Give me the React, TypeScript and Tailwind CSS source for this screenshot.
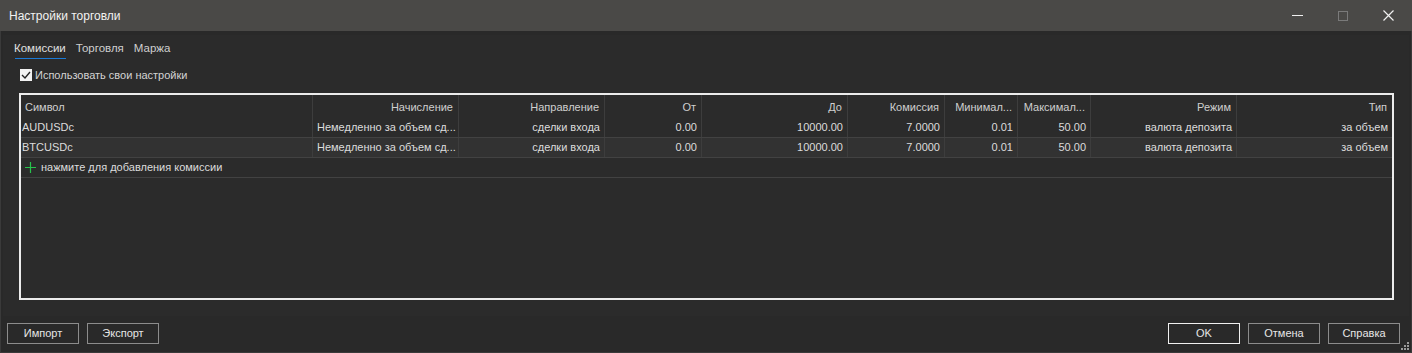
import React from "react";

const cols = [
  { label: "Символ", w: "w-[292px]", left: true },
  { label: "Начисление", w: "w-[146px]", cellLeft: true },
  { label: "Направление", w: "w-[146px]" },
  { label: "От", w: "w-[97px]" },
  { label: "До", w: "w-[146px]" },
  { label: "Комиссия", w: "w-[97px]" },
  { label: "Минимал...", w: "w-[73px]" },
  { label: "Максимал...", w: "w-[73px]" },
  { label: "Режим", w: "w-[146px]" },
  { label: "Тип", w: "flex-1" },
];

const rows = [
  ["AUDUSDc", "Немедленно за объем сд...", "сделки входа", "0.00", "10000.00", "7.0000", "0.01", "50.00", "валюта депозита", "за объем"],
  ["BTCUSDc", "Немедленно за объем сд...", "сделки входа", "0.00", "10000.00", "7.0000", "0.01", "50.00", "валюта депозита", "за объем"],
];

function Btn({ children, primary }: { children: React.ReactNode; primary?: boolean }) {
  return (
    <button
      className={
        primary
          ? "w-[72px] h-[21px] border border-[#f0f0f0] text-[#e6e6e6] text-[11px] leading-none"
          : "w-[72px] h-[21px] border border-[#8c8c8c] text-[#e6e6e6] text-[11px] leading-none"
      }
    >
      {children}
    </button>
  );
}

export default function App() {
  return (
    <div
      className="w-[1412px] h-[353px] flex flex-col bg-[#292929] text-[#d4d4d4] text-[11px] overflow-hidden"
      style={{ fontFamily: '"Liberation Sans", Arial, sans-serif' }}
    >
      {/* title bar */}
      <div className="h-[31px] shrink-0 bg-[#4a4947] flex items-center pl-[9px]">
        <span className="text-[12px] text-[#f2f2f2]">Настройки торговли</span>
        <div className="ml-auto flex items-center h-full">
          <div className="w-[46px] h-full flex items-center justify-center">
            <div className="w-[11px] h-px bg-[#f0f0f0]" />
          </div>
          <div className="w-[46px] h-full flex items-center justify-center">
            <div className="w-[10px] h-[10px] border border-[#7a7a7a]" />
          </div>
          <div className="w-[46px] h-full flex items-center justify-center pr-[2px]">
            <svg width="11" height="11" viewBox="0 0 11 11">
              <path d="M0.5 0.5 L10.5 10.5 M10.5 0.5 L0.5 10.5" stroke="#f0f0f0" strokeWidth="1.2" />
            </svg>
          </div>
        </div>
      </div>

      <div className="flex-1 flex flex-col border-x border-b border-[#3a3a3a]">
        <div className="mx-[2px] mt-[4px] h-[281px] bg-[#2b2b2b] flex flex-col">
          {/* tabs */}
          <div className="flex gap-[10px] pl-[11px] pt-[5px] h-[24px] text-[11.5px]">
            <div className="flex flex-col">
              <span className="text-[#e0e0e0] leading-[16px]">Комиссии</span>
              <div className="h-[2px] bg-[#1b7ad6] mt-[2px] ml-[1px]" />
            </div>
            <span className="leading-[16px] text-[#cfcfcf]">Торговля</span>
            <span className="leading-[16px] text-[#cfcfcf]">Маржа</span>
          </div>

          {/* checkbox */}
          <div className="flex items-center pl-[17px] mt-[9px] h-[14px]">
            <div className="w-[12px] h-[12px] bg-[#f2f2f2] flex items-center justify-center">
              <svg width="10" height="10" viewBox="0 0 10 10">
                <path d="M1 5 L4 8 L9 2" stroke="#222" strokeWidth="1.4" fill="none" />
              </svg>
            </div>
            <span className="ml-[3px] text-[#d4d4d4]">Использовать свои настройки</span>
          </div>

          {/* table */}
          <div className="ml-[16px] mt-[11px] w-[1375px] h-[207px] border-2 border-[#ececec] bg-[#2b2b2b] flex flex-col">
            <div className="flex h-[23px] shrink-0">
              {cols.map((c, i) => (
                <div
                  key={i}
                  className={`${c.w} ${c.left ? "justify-start pl-[4px]" : "justify-end pr-[5px]"} ${i < cols.length - 1 ? "border-r border-[#3d3d3d]" : ""} flex items-center pt-[2px] text-[#cfcfcf]`}
                >
                  {c.label}
                </div>
              ))}
            </div>
            {rows.map((r, ri) => (
              <div
                key={ri}
                className={`flex shrink-0 border-b border-[#424242] ${ri === 1 ? "bg-[#323232] h-[20px]" : "h-[20px]"}`}
              >
                {r.map((v, i) => (
                  <div
                    key={i}
                    className={`${cols[i].w} ${cols[i].left ? "justify-start pl-[1px]" : cols[i].cellLeft ? "justify-start pl-[4px]" : "justify-end pr-[4px]"} ${i < cols.length - 1 ? "border-r border-[#3d3d3d]" : ""} flex items-center text-[#dcdcdc] whitespace-nowrap overflow-hidden`}
                  >
                    {v}
                  </div>
                ))}
              </div>
            ))}
            <div className="flex items-center h-[20px] shrink-0 border-b border-[#424242] pl-[4px]">
              <svg width="11" height="11" viewBox="0 0 11 11">
                <path d="M5.5 0 V11 M0 5.5 H11" stroke="#27c24c" strokeWidth="1.2" />
              </svg>
              <span className="ml-[5px] text-[#dcdcdc]">нажмите для добавления комиссии</span>
            </div>
          </div>
        </div>

        {/* bottom buttons */}
        <div className="flex items-center pl-[6px] pr-[11px] mt-[7px] relative">
          <div className="flex gap-[8px]">
            <Btn>Импорт</Btn>
            <Btn>Экспорт</Btn>
          </div>
          <div className="ml-auto flex gap-[8px]">
            <Btn primary>OK</Btn>
            <Btn>Отмена</Btn>
            <Btn>Справка</Btn>
          </div>
          <svg className="absolute right-[1px] top-[19px]" width="9" height="9" viewBox="0 0 9 9">
            <rect x="6" y="0" width="2" height="2" fill="#9a9a9a" />
            <rect x="3" y="3" width="2" height="2" fill="#9a9a9a" />
            <rect x="6" y="3" width="2" height="2" fill="#9a9a9a" />
            <rect x="0" y="6" width="2" height="2" fill="#9a9a9a" />
            <rect x="3" y="6" width="2" height="2" fill="#9a9a9a" />
            <rect x="6" y="6" width="2" height="2" fill="#9a9a9a" />
          </svg>
        </div>
      </div>
    </div>
  );
}
